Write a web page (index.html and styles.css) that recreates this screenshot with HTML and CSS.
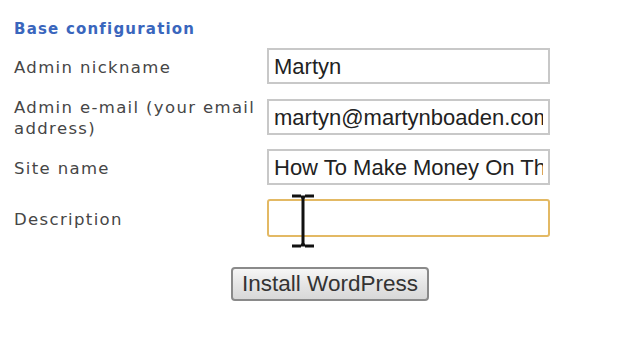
FILE: index.html
```html
<!DOCTYPE html>
<html lang="en">
<head>
  <meta charset="UTF-8" />
  <title>Install WordPress</title>
  <link rel="stylesheet" href="styles.css">
</head>
<body>
  <div class="setup">
    <h2>Base configuration</h2>
    <div class="form">
      <label for="nick">Admin nickname</label>
      <input type="text" id="nick" value="Martyn" />

      <label for="mail">Admin e-mail (your email address)</label>
      <input type="text" id="mail" value="martyn@martynboaden.com" />

      <label for="site">Site name</label>
      <input type="text" id="site" value="How To Make Money On The Internet" />

      <label for="desc">Description</label>
      <div class="desc-wrap">
        <input type="text" id="desc" class="focused" />
        <svg class="ibeam" width="24" height="54" viewBox="0 0 24 54">
          <path d="M1 2h9M14 2h9M10 3h4M12 3v48M10 51h4M1 52h9M14 52h9" stroke="#111" stroke-width="3" fill="none"/>
        </svg>
      </div>
    </div>
    <button>Install WordPress</button>
  </div>
</body>
</html>
```
FILE: styles.css
```css
body {
  margin: 0;
  background: #fff;
  font-family: "DejaVu Sans", Verdana, sans-serif;
}
.setup {
  padding: 20px 0 0 14px;
}
h2 {
  margin: 0 0 10px;
  font-size: 15px;
  letter-spacing: 1.2px;
  font-weight: bold;
  color: #3a66bd;
}
.form {
  display: grid;
  grid-template-columns: 253px 283px;
  grid-auto-rows: 36px;
  row-gap: 14.5px;
  align-items: center;
}
label {
  padding-top: 3px;
  font-size: 16.5px;
  line-height: 21px;
  letter-spacing: 1.35px;
  color: #464646;
}
input {
  box-sizing: border-box;
  width: 283px;
  height: 36px;
  margin: 0;
  padding: 2px 5px 0;
  border: 2px solid #c8c8c8;
  font-family: "Liberation Sans", Arial, sans-serif;
  font-size: 22px;
  color: #222;
  background: #fff;
  outline: none;
}
.desc-wrap {
  position: relative;
}
input.focused {
  height: 38px;
  border-color: #e3b964;
  border-radius: 3px;
}
.ibeam {
  position: absolute;
  left: 24px;
  top: -5px;
}
button {
  margin: 31px 0 0 217px;
  width: 198px;
  height: 34px;
  padding: 0;
  font-family: "Liberation Sans", Arial, sans-serif;
  font-size: 22.5px;
  color: #333;
  border: 2px solid #8a8a8a;
  border-radius: 4px;
  background: linear-gradient(#f6f6f6, #e4e4e4 55%, #d8d8d8);
}
```
